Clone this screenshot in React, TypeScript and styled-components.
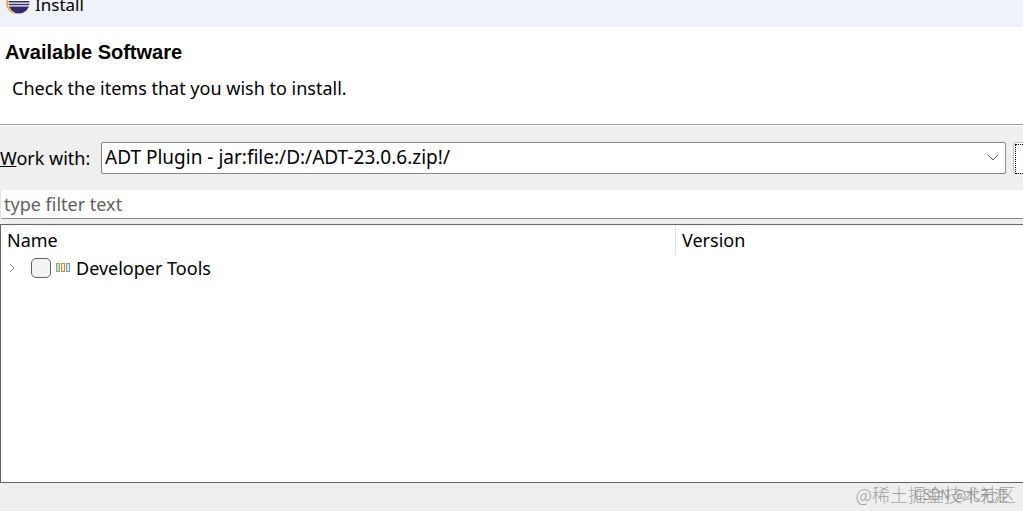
import React from "react";
import styled, { createGlobalStyle } from "styled-components";

const Global = createGlobalStyle`
  * { box-sizing: border-box; }
  html, body, #root { height: 100%; }
  body {
    margin: 0;
    overflow: hidden;
    background: #efefef;
    color: #000;
    font: 18px/26px "Noto Sans", "Open Sans", "Noto Sans CJK SC", sans-serif;
  }
  input, select, button { font: inherit; color: inherit; }
`;

const Window = styled.div`
  display: flex;
  flex-direction: column;
  height: 100%;
  position: relative;
`;

const TitleBar = styled.header`
  display: flex;
  gap: 5px;
  height: 27px;
  padding-left: 6px;
  background: #eff3f9;
  overflow: hidden;
`;

const TitleText = styled.span`
  font-size: 17px;
  line-height: 10px;
`;

const Banner = styled.section`
  height: 98px;
  padding: 12px 5px;
  background: #fff;
  border-bottom: 1px solid #a0a0a0;
`;

const Heading = styled.h1`
  margin: 0 0 10px;
  font: bold 20px/26px "Liberation Sans", Arial, sans-serif;
`;

const Hint = styled.p`
  margin: 0;
  padding-left: 7px;
`;

const SourceRow = styled.div`
  display: flex;
  align-items: center;
  padding: 16px 0;
  border-top: 1px solid #fff;
`;

const SourceLabel = styled.label`
  width: 101px;
  flex: none;
  white-space: nowrap;
`;

const Combo = styled.div`
  flex: 1;
  display: grid;
  align-items: center;
  > * { grid-area: 1 / 1; }
  > svg { justify-self: end; margin-right: 7px; pointer-events: none; }
`;

const Select = styled.select`
  appearance: none;
  width: 100%;
  height: 32px;
  padding: 0 30px 2px 3px;
  background: #fff;
  border: 1px solid #868686;
  border-radius: 2px;
  font-size: 19px;
`;

const AddButton = styled.button`
  flex: none;
  width: 10px;
  height: 32px;
  margin-left: 7px;
  padding: 1px 0 1px 1px;
  background: #fdfdfd;
  border: 1px solid #c4c4c4;
  border-right: 0;
  border-radius: 4px 0 0 4px;
  &::before {
    content: "";
    display: block;
    height: 28px;
    border: 1px dotted #000;
    border-right: 0;
  }
`;

const Filter = styled.input`
  width: 100%;
  height: 29px;
  flex: none;
  padding: 0 3px;
  background: #fff;
  border: solid #e4e4e4;
  border-width: 0 0 1px 1px;
  border-bottom-color: #868686;
  border-radius: 2px 0 0 2px;
  &::placeholder { color: #606060; opacity: 1; }
`;

const TreePane = styled.main`
  flex: 1;
  margin: 5px 0 28px;
  background: #fff;
  border: 1px solid #646464;
  border-right: 0;
`;

const Table = styled.table`
  width: 100%;
  table-layout: fixed;
  border-collapse: collapse;
`;

const HeadCell = styled.th<{ $width?: string }>`
  width: ${(p) => p.$width ?? "auto"};
  height: 30px;
  padding: 0 6px;
  text-align: left;
  font-weight: normal;
  & + & { border-left: 1px solid #e5e5e5; }
`;

const Cell = styled.td`
  padding: 0;
`;

const Item = styled.div`
  display: flex;
  align-items: center;
  padding-left: 7px;
  label { margin-left: 5px; }
`;

const Expander = styled.button`
  display: flex;
  width: 8px;
  padding: 0;
  border: 0;
  background: none;
`;

const Check = styled.input`
  appearance: none;
  width: 20px;
  height: 20px;
  margin: 0 5px 0 15px;
  background: #f3f3f3;
  border: 1px solid #626262;
  border-radius: 5px;
`;

const Watermark = styled.span<{ $size: number; $right: number; $color: string }>`
  position: absolute;
  right: ${(p) => p.$right}px;
  bottom: 4px;
  font-family: "Noto Sans CJK SC", sans-serif;
  font-weight: 300;
  font-size: ${(p) => p.$size}px;
  color: ${(p) => p.$color};
  white-space: nowrap;
`;

const EclipseLogo = () => (
  <svg width="24" height="15" viewBox="0 0 24 15" aria-hidden="true">
    <circle cx="11" cy="3" r="11" fill="#f5a33c" />
    <circle cx="13" cy="3" r="11" fill="#f4f2f8" />
    <circle cx="13" cy="3" r="10.5" fill="#38286f" />
    <path d="M2 0h22v1H2zM2 2.5h22v1.3H2zM3 5.2h20v1.3H3z" fill="#fff" />
  </svg>
);

const CategoryIcon = () => (
  <svg width="15" height="10" viewBox="0 0 15 10" aria-hidden="true">
    <rect x="0.5" y="0.5" width="3" height="8" fill="#c9e6b8" stroke="#7daa84" />
    <rect x="5.5" y="0.5" width="3" height="8" fill="#fff0b8" stroke="#b58b38" />
    <rect x="10.5" y="0.5" width="3" height="8" fill="#d6ecfb" stroke="#7795bb" />
  </svg>
);

export default function App() {
  return (
    <Window>
      <Global />
      <TitleBar>
        <EclipseLogo />
        <TitleText>Install</TitleText>
      </TitleBar>
      <Banner>
        <Heading>Available Software</Heading>
        <Hint>Check the items that you wish to install.</Hint>
      </Banner>
      <SourceRow>
        <SourceLabel htmlFor="site"><u>W</u>ork with:</SourceLabel>
        <Combo>
          <Select id="site">
            <option>ADT Plugin - jar:file:/D:/ADT-23.0.6.zip!/</option>
          </Select>
          <svg width="12" height="8" viewBox="0 0 12 8" fill="none" stroke="#555" aria-hidden="true">
            <path d="M1 1l5 5 5-5" />
          </svg>
        </Combo>
        <AddButton aria-label="Add" />
      </SourceRow>
      <Filter placeholder="type filter text" aria-label="Filter" />
      <TreePane>
        <Table>
          <thead>
            <tr>
              <HeadCell $width="66%">Name</HeadCell>
              <HeadCell>Version</HeadCell>
            </tr>
          </thead>
          <tbody>
            <tr>
              <Cell>
                <Item>
                  <Expander aria-label="Expand">
                    <svg width="8" height="10" viewBox="0 0 8 10" fill="none" stroke="#8a8a8a">
                      <path d="M2 1l4 4-4 4" />
                    </svg>
                  </Expander>
                  <Check type="checkbox" id="devtools" />
                  <CategoryIcon />
                  <label htmlFor="devtools">Developer Tools</label>
                </Item>
              </Cell>
              <Cell />
            </tr>
          </tbody>
        </Table>
      </TreePane>
      <Watermark $size={18} $right={7} $color="#a2a2a2">@稀土掘金技术社区</Watermark>
      <Watermark $size={14} $right={15} $color="#858585">CSDN @北无涯</Watermark>
    </Window>
  );
}
